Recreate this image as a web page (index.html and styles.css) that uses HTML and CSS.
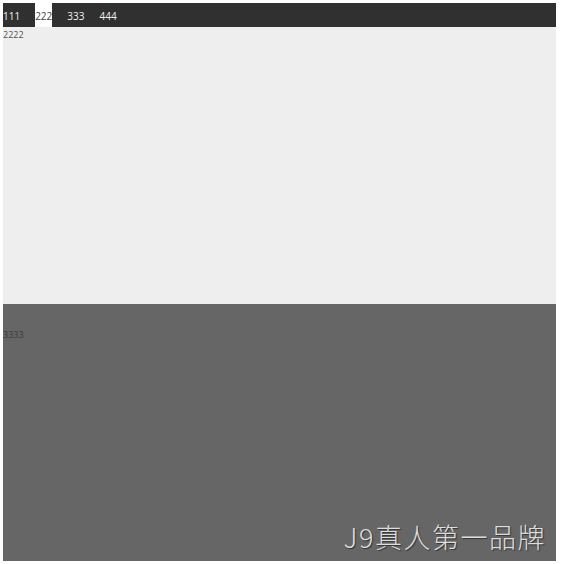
FILE: index.html
```html
<!DOCTYPE html>
<html>
<head>
<meta charset="utf-8">
<link rel="stylesheet" href="styles.css">
</head>
<body>
<div class="page">
  <ul class="tabs">
    <li class="tab">111</li>
    <li class="tab active">222</li>
    <li class="tab">333</li>
    <li class="tab">444</li>
  </ul>
  <div class="panel light">2222</div>
  <div class="panel dark">3333</div>
  <div class="watermark">J9真人第一品牌</div>
</div>
</body>
</html>
```
FILE: styles.css
```css
html, body {
  margin: 0;
  padding: 0;
  background: #ffffff;
}
body {
  padding: 3px 5px 3px 3px;
  font-family: "Open Sans", "Liberation Sans", sans-serif;
}
.page {
  position: relative;
  width: 553px;
  height: 558px;
  display: flex;
  flex-direction: column;
}
.tabs {
  list-style: none;
  margin: 0;
  padding: 0;
  height: 24px;
  background: #303030;
  display: flex;
  align-items: stretch;
}
.tab {
  font-size: 10px;
  color: #f2f2f2;
  margin-right: 15px;
  line-height: 24px;
  padding-top: 1px;
}
.tab.active {
  background: #ffffff;
  color: #444444;
}
.panel {
  font-size: 9px;
  line-height: 13px;
  padding-top: 1px;
  color: #555555;
}
.panel.light {
  height: 276px;
  background: #eeeeee;
}
.panel.dark {
  flex: 1;
  background: #666666;
  color: #3a3a3a;
  padding-top: 24px;
}
.watermark {
  position: absolute;
  right: 10px;
  bottom: 5px;
  font-family: "Noto Sans CJK SC", sans-serif;
  font-weight: 300;
  font-size: 27px;
  color: #dddddd;
  text-shadow: 1px 1px 1px #333333;
  letter-spacing: 1.5px;
}
```
